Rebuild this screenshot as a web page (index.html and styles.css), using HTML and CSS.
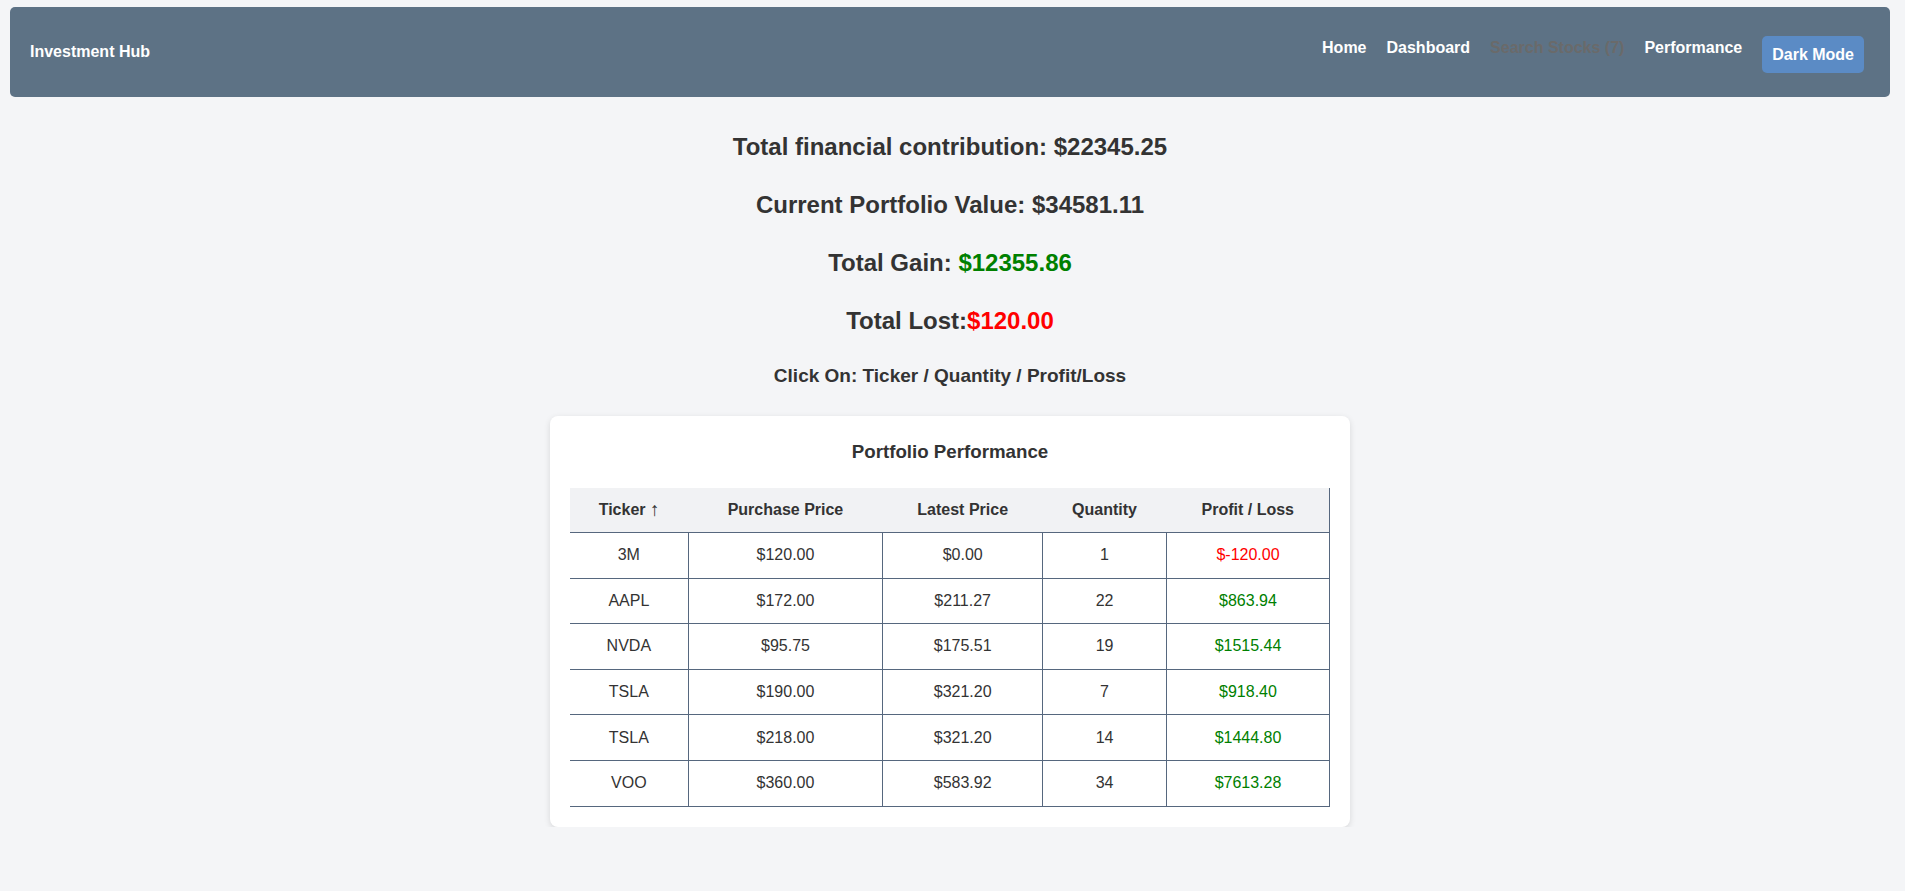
FILE: index.html
```html
<!DOCTYPE html>
<html lang="en">
<head>
<meta charset="utf-8">
<title>Investment Hub</title>
<link rel="stylesheet" href="styles.css">
</head>
<body>
<nav class="navbar">
  <div class="brand">Investment Hub</div>
  <div class="nav-right">
    <a class="nav-link" href="#">Home</a>
    <a class="nav-link" href="#">Dashboard</a>
    <a class="nav-link disabled" href="#">Search Stocks (7)</a>
    <a class="nav-link" href="#">Performance</a>
    <button class="mode-btn">Dark Mode</button>
  </div>
</nav>
<main class="main">
  <h2 class="stat">Total financial contribution: $22345.25</h2>
  <h2 class="stat">Current Portfolio Value: $34581.11</h2>
  <h2 class="stat">Total Gain: <span class="pos">$12355.86</span></h2>
  <h2 class="stat">Total Lost:<span class="neg">$120.00</span></h2>
  <h3 class="hint">Click On: Ticker / Quantity / Profit/Loss</h3>
  <section class="card">
    <h3 class="card-title">Portfolio Performance</h3>
    <table class="perf">
      <thead>
        <tr><th>Ticker <span class="arrow">↑</span></th><th>Purchase Price</th><th>Latest Price</th><th>Quantity</th><th>Profit / Loss</th></tr>
      </thead>
      <tbody>
        <tr><td>3M</td><td>$120.00</td><td>$0.00</td><td>1</td><td class="neg-cell">$-120.00</td></tr>
        <tr><td>AAPL</td><td>$172.00</td><td>$211.27</td><td>22</td><td class="pos-cell">$863.94</td></tr>
        <tr><td>NVDA</td><td>$95.75</td><td>$175.51</td><td>19</td><td class="pos-cell">$1515.44</td></tr>
        <tr><td>TSLA</td><td>$190.00</td><td>$321.20</td><td>7</td><td class="pos-cell">$918.40</td></tr>
        <tr><td>TSLA</td><td>$218.00</td><td>$321.20</td><td>14</td><td class="pos-cell">$1444.80</td></tr>
        <tr><td>VOO</td><td>$360.00</td><td>$583.92</td><td>34</td><td class="pos-cell">$7613.28</td></tr>
      </tbody>
    </table>
  </section>
</main>
</body>
</html>
```
FILE: styles.css
```css
* { box-sizing: border-box; }
html, body { margin: 0; padding: 0; }
body {
  background: #f4f5f7;
  font-family: "Liberation Sans", Arial, sans-serif;
  color: #333;
  padding: 7px 15px 0 10px;
}
.navbar {
  background: #5d7285;
  border-radius: 5px;
  height: 90px;
  display: flex;
  align-items: center;
  justify-content: space-between;
  padding: 0 26px 0 20px;
}
.brand {
  color: #fff;
  font-weight: bold;
  font-size: 16px;
}
.nav-right {
  display: flex;
  align-items: flex-start;
  gap: 20px;
  margin-top: 4px;
}
.nav-link {
  color: #fff;
  text-decoration: none;
  font-weight: bold;
  font-size: 16px;
  line-height: 18px;
  padding-top: 3px;
}
.nav-link.disabled { color: #6a6a6a; }
.mode-btn {
  background: #5b8bc5;
  color: #fff;
  border: none;
  border-radius: 5px;
  font-family: inherit;
  font-weight: bold;
  font-size: 16px;
  line-height: 18px;
  padding: 10px 10px 9px;
}
.main {
  display: flex;
  flex-direction: column;
  align-items: center;
  padding-top: 36px;
}
.stat {
  font-size: 24px;
  line-height: 28px;
  margin: 0 0 30px;
  font-weight: bold;
}
.pos { color: #008000; }
.neg { color: #ff0000; }
.hint {
  font-size: 19px;
  line-height: 22px;
  margin: 0 0 29px;
  font-weight: bold;
}
.card {
  width: 800px;
  background: #fff;
  border-radius: 8px;
  box-shadow: 0 2px 6px rgba(0,0,0,0.12);
  padding: 25px 20px 20px;
}
.card-title {
  text-align: center;
  font-size: 18.72px;
  line-height: 22px;
  margin: 0 0 25px;
}
.perf {
  width: 100%;
  border-collapse: collapse;
  font-size: 16px;
}
.perf th, .perf td {
  text-align: center;
  padding: 13px 12px;
  line-height: normal;
}
.perf td { padding: 13.3px 12px; }
.perf th {
  background: #f1f2f4;
  font-weight: bold;
  border-bottom: 1px solid #56677e;
}
.perf th:last-child { border-right: 1px solid #56677e; }
.arrow {
  font-weight: normal;
  font-size: 19px;
  line-height: 0;
  vertical-align: -1px;
}
.perf td {
  border-right: 1px solid #56677e;
  border-bottom: 1px solid #56677e;
}
.pos-cell { color: #008000; }
.neg-cell { color: #ff0000; }
```
